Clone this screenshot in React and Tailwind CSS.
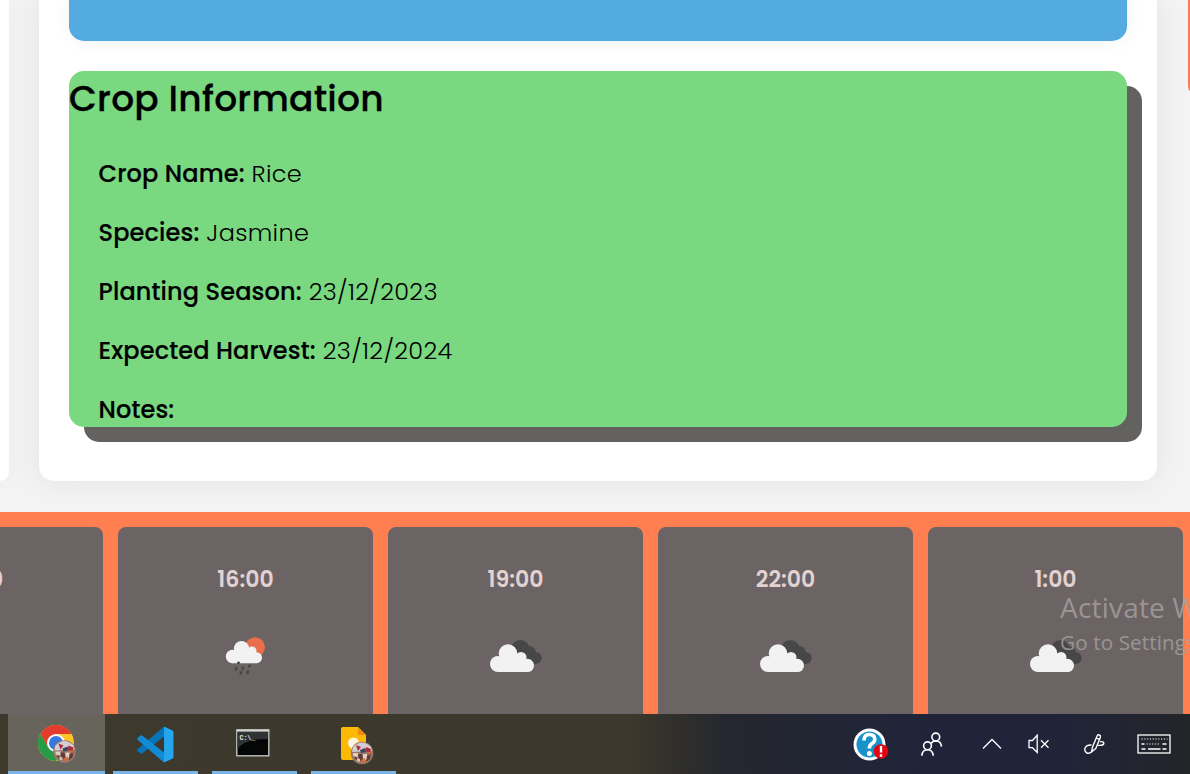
const rows = [
  { label: 'Crop Name:', value: 'Rice' },
  { label: 'Species:', value: 'Jasmine' },
  { label: 'Planting Season:', value: '23/12/2023' },
  { label: 'Expected Harvest:', value: '23/12/2024' },
  { label: 'Notes:', value: '' },
];

const hours = [
  { time: '13:00', icon: 'none' },
  { time: '16:00', icon: 'rain' },
  { time: '19:00', icon: 'cloud' },
  { time: '22:00', icon: 'cloud' },
  { time: '1:00', icon: 'cloud' },
];

function CloudIcon() {
  return (
    <svg width="54" height="36" viewBox="0 0 54 36">
      <g fill="#474747">
        <circle cx="31.3" cy="9.5" r="9.5" />
        <circle cx="41" cy="12" r="5.8" />
        <circle cx="46.7" cy="18" r="6" />
        <path d="M24 12h22l1 12H24z" />
      </g>
      <g fill="#f2f2f2">
        <circle cx="19" cy="13.6" r="9.3" />
        <circle cx="9" cy="24" r="8" />
        <circle cx="32" cy="17.5" r="5.5" />
        <circle cx="38.3" cy="25.4" r="6.7" />
        <path d="M9 17h24l5.3 5v10.1H9z" />
      </g>
    </svg>
  );
}

function RainIcon() {
  return (
    <svg width="54" height="42" viewBox="0 0 54 42">
      <circle cx="36" cy="10.2" r="10" fill="#e96e4b" />
      <g fill="#f2f2f2">
        <circle cx="22.5" cy="11.5" r="7.6" />
        <circle cx="13.5" cy="19.5" r="6.7" />
        <circle cx="33" cy="14" r="4.5" />
        <circle cx="37.5" cy="20.7" r="5.5" />
        <path d="M13.5 13H33l4.5 5v8.2h-24z" />
      </g>
      <circle cx="19.5" cy="25.7" r="1.3" fill="#333" />
      <path d="M17.5 31l-.6 1.6M24 30.5l-.6 1.6M30.8 28.5l-.5 1M22 35.3l-.3 1M29 34.5l-.6 1.6" stroke="#484545" strokeWidth="2.4" strokeLinecap="round" />
    </svg>
  );
}

function Avatar({ x, y }) {
  return (
    <g transform={`translate(${x} ${y})`}>
      <circle r="11.3" fill="#99786c" />
      <path d="M-9-6 Q0-15 9-6 L10-2-10-1z" fill="#d3ced3" />
      <path d="M-6-8l5 2-3 4zM4-6l5 2-1 4-5-2z" fill="#b22a38" />
      <path d="M-2-3l5-2 1 4-5 1z" fill="#3e4564" />
      <path d="M-9 0l5 0 0 4-5-1zM1 1h4v6H1z" fill="#e2cfc2" />
      <path d="M-4 1h4l1 5-4 3zM5 3l4-3-1 6-4 3zM-8 5l3-1 1 4z" fill="#603c33" />
      <path d="M-1 7l4-2 1 4-4 1zM5-1l4 0-1 3z" fill="#d66a3e" />
      <path d="M-5 5l3 1 0 3-3-1z" fill="#d8c5ad" />
    </g>
  );
}

function ChromeIcon() {
  return (
    <svg width="42" height="42" viewBox="0 0 42 42">
      <circle cx="20" cy="20" r="18" fill="#fdc525" />
      <path d="M4.4 11A18 18 0 0 1 35.6 11H20L12.2 24.5z" fill="#e33b2e" />
      <path d="M4.4 11A18 18 0 0 0 20 38L27.8 24.5 12.2 24.5z" fill="#269b48" />
      <circle cx="20" cy="20" r="9" fill="#fff" />
      <circle cx="20" cy="20" r="7" fill="#3478e0" />
      <Avatar x={28.5} y={28.5} />
    </svg>
  );
}

function CodeIcon() {
  return (
    <svg width="37" height="37" viewBox="0 0 37 37">
      <path d="M27 .5v10L5.5 27.3Q4 28.2 2.7 27L.8 25.2Q-.2 24 1 22.8z" fill="#0873b9" />
      <path d="M27 36.5v-10L5.5 9.7Q4 8.8 2.7 10L.8 11.8Q-.2 13 1 14.2z" fill="#118bd3" />
      <path d="M27 .5l8.2 3.7Q36.5 5 36.5 6.3v24.4q0 1.4-1.3 2.1L27 36.5z" fill="#25a5ee" />
    </svg>
  );
}

function TerminalIcon() {
  return (
    <svg width="34" height="28" viewBox="0 0 34 28">
      <rect x=".8" y=".8" width="32" height="26" fill="#050606" stroke="#bfc2c1" strokeWidth="1.4" />
      <path d="M1.5 3h30.6v7Q10 9 1.5 20z" fill="#303333" />
      <path d="M1 1.7h32" stroke="#d0d3d2" strokeWidth="2" />
      <text x="3.5" y="10.5" fill="#e9eceb" fontSize="6.5" fontWeight="700" fontFamily="Liberation Mono, monospace">C:\_</text>
    </svg>
  );
}

function KeepIcon() {
  return (
    <svg width="36" height="40" viewBox="0 0 36 40">
      <path d="M3 1h15l8 8v25H3q-2 0-2-2V3q0-2 2-2z" fill="#fcb906" />
      <path d="M18 1l8 8h-8z" fill="#ec8d10" />
      <circle cx="13.5" cy="17" r="5.5" fill="#fff6df" />
      <path d="M11 21h6v5h-6z" fill="#fff6df" />
      <Avatar x={22} y={27} />
    </svg>
  );
}

function HelpIcon() {
  return (
    <svg width="36" height="34" viewBox="0 0 36 34">
      <circle cx="16.5" cy="16.5" r="14.5" fill="#1793ca" stroke="#fff" strokeWidth="3" />
      <path d="M11 12.5Q11 6.5 16.3 6.5T21.8 11.2Q21.8 13.7 19 15.5 16.3 17.2 16.3 20.4" fill="none" stroke="#fff" strokeWidth="3.6" />
      <circle cx="16.4" cy="25.4" r="2.5" fill="#fff" />
      <circle cx="28" cy="23.5" r="7.3" fill="#e30612" />
      <path d="M28 18v6.5M28 26.3v2.5" stroke="#fff" strokeWidth="2.4" />
    </svg>
  );
}

function PeopleIcon() {
  return (
    <svg width="24" height="25" viewBox="0 0 24 25" fill="none" stroke="#fff" strokeWidth="1.6">
      <circle cx="15.8" cy="5" r="3.9" />
      <circle cx="7.5" cy="13.8" r="3.9" />
      <path d="M1.8 23.8Q2.2 17.8 7.5 17.8t5.7 6M11 11.6Q12.3 9 15.8 9q5.2 0 5.7 5.6" />
    </svg>
  );
}

function MuteIcon() {
  return (
    <svg width="22" height="20" viewBox="0 0 22 20" fill="none" stroke="#fff" strokeWidth="1.3">
      <path d="M1 6.5h3.5L9.2 1.2v17.2L4.5 13.7H1z" />
      <path d="M13 6.2l7.5 7.5M20.5 6.2l-7.5 7.5" />
    </svg>
  );
}

function PenIcon() {
  return (
    <svg width="22" height="22" viewBox="0 0 22 22" fill="none" stroke="#fff" strokeWidth="1.4" strokeLinejoin="round">
      <path d="M8.5 19l1-5L14.2 2.8q.7-1.4 2.2-.8t1 2.2L12.8 15.5zM13.3 5l3 1.2" />
      <path d="M8.5 12Q4 11.5 2.3 14.5T3.8 20q2.6.8 4.7-1M17 8.6q4-.2 3.8 1.8t-4 2h-2.2" />
    </svg>
  );
}

function KeyboardIcon() {
  return (
    <svg width="34" height="20" viewBox="0 0 34 20" fill="none" stroke="#fff">
      <rect x="1" y="1" width="32" height="18" strokeWidth="1.3" />
      <path d="M4.5 5h26" strokeWidth="1.2" strokeDasharray="1.2 1.6" />
      <path d="M9.5 10h14" strokeWidth="1.2" strokeDasharray="1.2 1.6" />
      <path d="M4.5 10h3M25.5 10h4M4.5 15h4M11 15h12.5M25.5 15h4" strokeWidth="1.3" />
    </svg>
  );
}

function TaskButton({ active, children }) {
  return (
    <div className={active
      ? 'flex h-[60px] w-[97px] shrink-0 items-center justify-center border-b-[3px] border-[#79b5e8] bg-[#67645b]'
      : 'flex h-[60px] w-[85px] shrink-0 items-center justify-center border-b-[3px] border-[#79b5e8]'}>
      {children}
    </div>
  );
}

export default function App() {
  return (
    <div className="relative flex h-[774px] w-[1190px] flex-col overflow-hidden bg-[#f3f3f3] font-['Poppins','Inter',sans-serif] text-black">
      <main className="flex h-[512px] items-start overflow-hidden">
        <aside className="h-[481px] w-[9px] shrink-0 rounded-br-[15px] bg-white shadow-[0_0_30px_rgba(0,0,0,0.06)]" />
        <section className="ml-[30px] h-[481px] w-[1118px] shrink-0 rounded-b-[15px] bg-white px-[30px] shadow-[0_0_30px_rgba(0,0,0,0.07)]">
          <div className="h-[41px] rounded-b-[15px] bg-[#53abdf] shadow-[0_0_20px_rgba(0,0,0,0.05)]" />
          <article className="mt-[30px] h-[356px] rounded-[15px] bg-[#7ad881] shadow-[15px_15px_0_#636260]">
            <h2 className="h-[74px] whitespace-nowrap text-[36px] leading-[55px] font-medium tracking-[0.24px] [-webkit-text-stroke:0.3px_black]">Crop Information</h2>
            <div className="pl-[29.5px]">
              {rows.map((r) => (
                <p key={r.label} className="h-[59px] whitespace-nowrap text-2xl leading-[58px] font-light tracking-[0.32px]">
                  <span className="font-medium tracking-[0.14px] [-webkit-text-stroke:0.2px_black]">{r.label}</span> {r.value}
                </p>
              ))}
            </div>
          </article>
        </section>
        <aside className="ml-[31px] h-[94px] w-5 shrink-0 rounded-bl-[8px] bg-[#f67c54]" />
      </main>

      <section className="flex h-[202px] gap-[15px] overflow-hidden bg-[#ff7f50] pt-[15px]">
        {hours.map((h, i) => (
          <div key={h.time} className={`${i === 0 ? '-ml-[152px]' : ''} flex h-[220px] w-[255px] shrink-0 flex-col items-center rounded-[8px] bg-[#6c6464]`}>
            <div className="mt-[37px] h-[30px] text-[22px] leading-[31px] font-semibold text-[#e2d2d1]">{h.time}</div>
            <div className="mt-[43px]">
              {h.icon === 'rain' && <RainIcon />}
              {h.icon === 'cloud' && <div className="pt-[3px] pl-px"><CloudIcon /></div>}
            </div>
          </div>
        ))}
      </section>

      <footer className="flex h-[60px] bg-[linear-gradient(90deg,#3d392c_0%,#3c382c_53%,#302f2c_57%,#24272e_61%,#20243a_78%,#20243a_88%,#242529_100%)]">
        <div className="flex pl-2">
          <TaskButton active><div className="pt-[3px]"><ChromeIcon /></div></TaskButton>
          <div className="ml-2"><TaskButton><div className="pt-[3px]"><CodeIcon /></div></TaskButton></div>
          <div className="ml-[14px]"><TaskButton><div className="pr-[3px]"><TerminalIcon /></div></TaskButton></div>
          <div className="ml-[14px]"><TaskButton><div className="pt-[6px] pl-[8px]"><KeepIcon /></div></TaskButton></div>
        </div>
        <div className="ml-auto flex items-center pr-[19px]">
          <div className="pt-px"><HelpIcon /></div>
          <div className="ml-[31px]"><PeopleIcon /></div>
          <svg className="ml-[38px]" width="20" height="12" viewBox="0 0 20 12" fill="none" stroke="#fff" strokeWidth="1.3"><path d="M1 10.5L10 1.5l9 9" /></svg>
          <div className="ml-[26px]"><MuteIcon /></div>
          <div className="ml-[33px]"><PenIcon /></div>
          <div className="ml-[32px]"><KeyboardIcon /></div>
        </div>
      </footer>

      <div className="absolute top-[589px] left-[1060px] whitespace-nowrap font-['Open_Sans',sans-serif] text-[#a7a2a2]/80">
        <div className="text-[28px] leading-[36px] tracking-[0.2px]">Activate Windows</div>
        <div className="text-[20.7px] leading-[34px] tracking-[0.1px]">Go to Settings to activate Windows.</div>
      </div>
    </div>
  );
}
